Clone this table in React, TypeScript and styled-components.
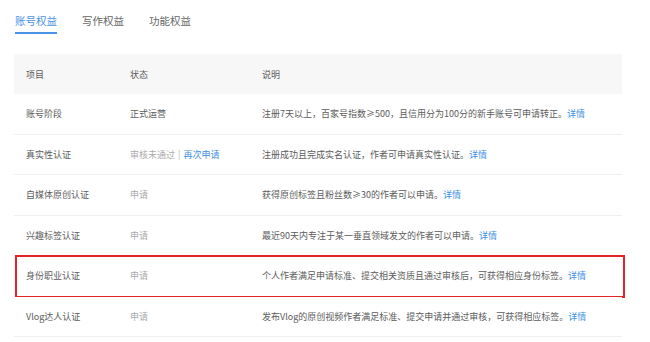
import React from 'react'
import styled, { createGlobalStyle } from 'styled-components'

const GlobalStyle = createGlobalStyle`
  body {
    margin: 0;
    background: #fff;
    font-family: "Noto Sans CJK SC", "Noto Sans", sans-serif;
  }
`

const Page = styled.div`
  width: 650px;
  height: 342px;
  overflow: hidden;
  background: #fff;
`

const Tabs = styled.div`
  display: flex;
  gap: 25px;
  padding-left: 15px;
`

const Tab = styled.div<{ $active?: boolean }>`
  padding: 14px 0 4px;
  font-size: 10.5px;
  line-height: 14px;
  color: ${(p) => (p.$active ? '#4a93e4' : '#666')};
  border-bottom: 2px solid ${(p) => (p.$active ? '#4a93e4' : 'transparent')};
`

const Table = styled.div`
  margin: 20px 0 0 14px;
  width: 608px;
`

const Row = styled.div<{ $head?: boolean; $marked?: boolean }>`
  position: relative;
  display: grid;
  grid-template-columns: 104px 132px 1fr;
  align-items: center;
  height: ${(p) => (p.$head ? '40px' : '39.5px')};
  background: ${(p) => (p.$head ? '#f7f7f7' : '#fff')};
  border-bottom: ${(p) => (p.$head ? 'none' : '1px solid #efefef')};
  font-size: 9px;
  color: #5c5c5c;

  &::after {
    content: '';
    display: ${(p) => (p.$marked ? 'block' : 'none')};
    position: absolute;
    left: 1px;
    right: -3px;
    top: -1px;
    bottom: -2px;
    border: 2px solid #e3232c;
  }
`

const Cell = styled.div<{ $muted?: boolean }>`
  padding-left: 12px;
  white-space: nowrap;
  color: ${(p) => (p.$muted ? '#aaa' : 'inherit')};
`

const Link = styled.span`
  color: #3d8fe2;
`

const Sep = styled.span`
  margin: 0 3px;
  color: #bbb;
`

type Item = {
  name: string
  status: React.ReactNode
  muted?: boolean
  desc: string
  marked?: boolean
}

const items: Item[] = [
  {
    name: '账号阶段',
    status: '正式运营',
    desc: '注册7天以上，百家号指数≥500，且信用分为100分的新手账号可申请转正。',
  },
  {
    name: '真实性认证',
    status: (
      <>
        审核未通过<Sep>|</Sep>
        <Link>再次申请</Link>
      </>
    ),
    muted: true,
    desc: '注册成功且完成实名认证，作者可申请真实性认证。',
  },
  {
    name: '自媒体原创认证',
    status: '申请',
    muted: true,
    desc: '获得原创标签且粉丝数≥30的作者可以申请。',
  },
  {
    name: '兴趣标签认证',
    status: '申请',
    muted: true,
    desc: '最近90天内专注于某一垂直领域发文的作者可以申请。',
  },
  {
    name: '身份职业认证',
    status: '申请',
    muted: true,
    desc: '个人作者满足申请标准、提交相关资质且通过审核后，可获得相应身份标签。',
    marked: true,
  },
  {
    name: 'Vlog达人认证',
    status: '申请',
    muted: true,
    desc: '发布Vlog的原创视频作者满足标准、提交申请并通过审核，可获得相应标签。',
  },
]

export default function App() {
  return (
    <Page>
      <GlobalStyle />
      <Tabs>
        <Tab $active>账号权益</Tab>
        <Tab>写作权益</Tab>
        <Tab>功能权益</Tab>
      </Tabs>
      <Table>
        <Row $head>
          <Cell>项目</Cell>
          <Cell>状态</Cell>
          <Cell>说明</Cell>
        </Row>
        {items.map((item) => (
          <Row key={item.name} $marked={item.marked}>
            <Cell>{item.name}</Cell>
            <Cell $muted={item.muted}>{item.status}</Cell>
            <Cell>
              {item.desc}
              <Link>详情</Link>
            </Cell>
          </Row>
        ))}
      </Table>
    </Page>
  )
}
